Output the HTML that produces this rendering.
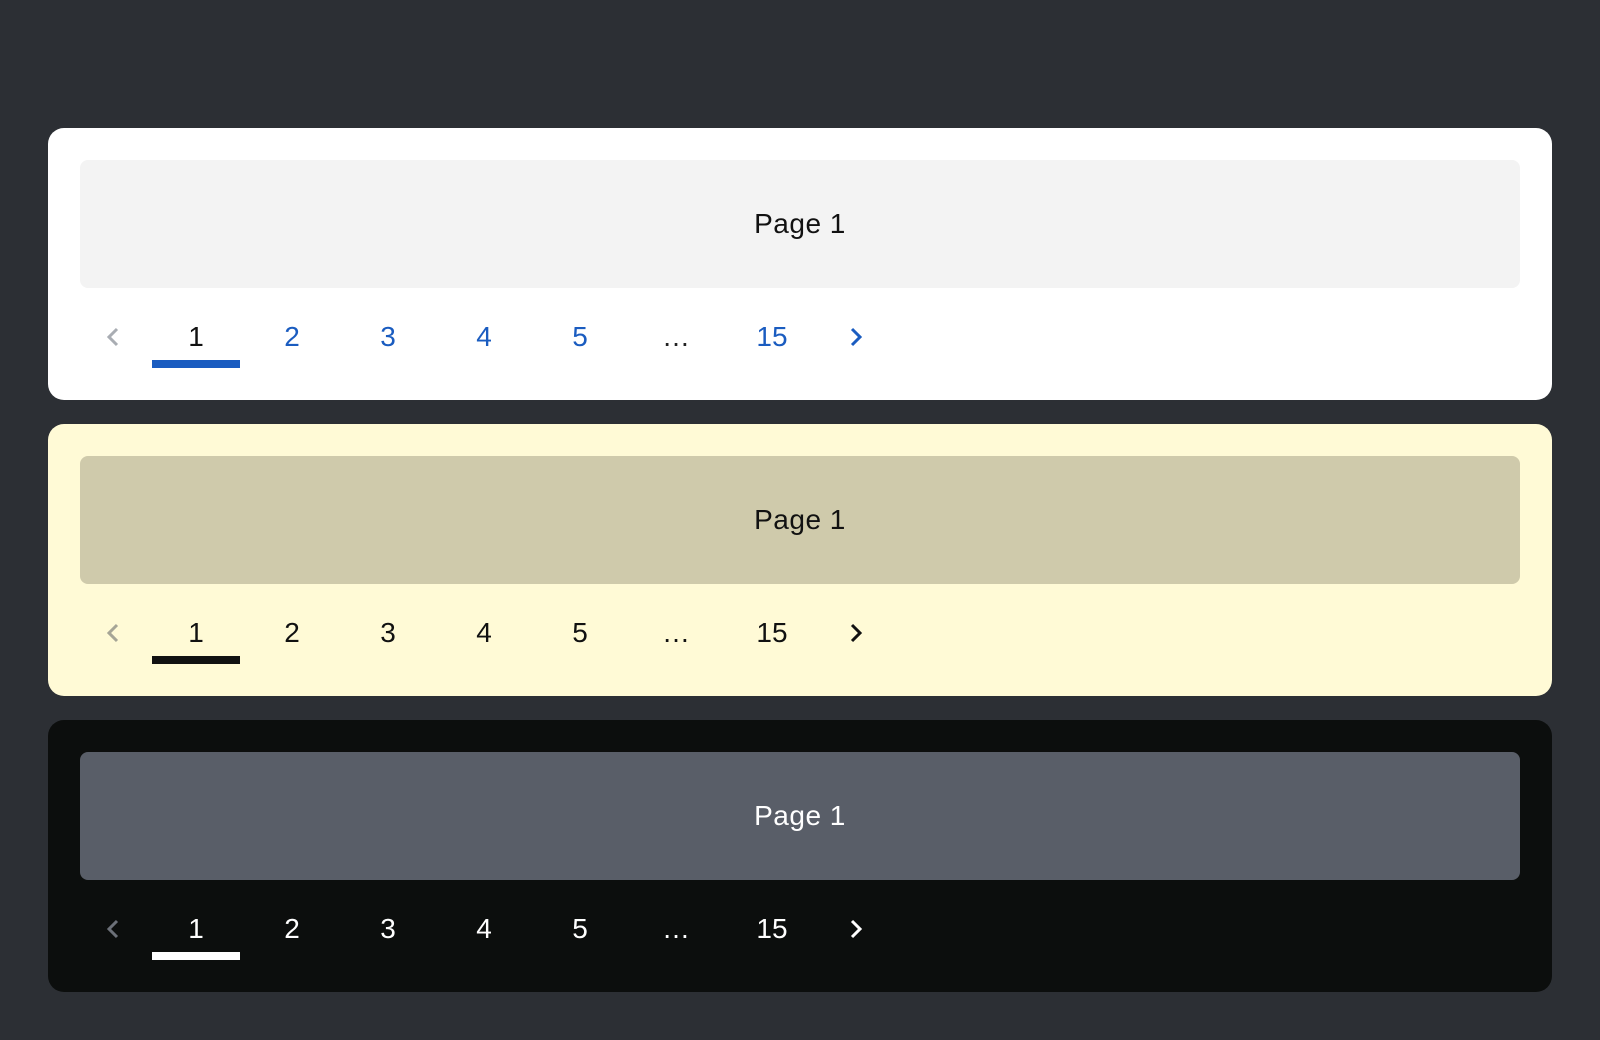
<!DOCTYPE html>
<html><head><style>
html,body{margin:0;width:1600px;height:1040px;background:#2c2f34;font-family:"Liberation Sans",sans-serif;overflow:hidden}
.card{position:absolute;left:48px;width:1504px;height:272px;border-radius:16px}
.box{position:absolute;left:32px;top:32px;width:1440px;height:128px;border-radius:8px;display:flex;align-items:center;justify-content:center;font-size:28px;font-weight:500;letter-spacing:.5px}
.pg{position:absolute;left:0;top:177px;height:64px;width:900px}
.it{position:absolute;top:0;width:88px;height:64px;line-height:64px;text-align:center;font-size:28px}
.ul{position:absolute;left:104px;top:55px;width:88px;height:8px}
svg{position:absolute;top:21px}
</style></head><body>

<div class="card" style="top:128px;background:#fff">
<div class="box" style="background:#f3f3f3;color:#111">Page 1</div>
<div class="pg" style="color:#1a5cc0">
<svg style="left:55px" width="20" height="22" viewBox="0 0 20 22"><path d="M14 3 L6 11 L14 19" fill="none" stroke="#a9adb3" stroke-width="3"/></svg>
<div class="it" style="left:104px;color:#111">1</div><div class="ul" style="background:#1a5cc0"></div>
<div class="it" style="left:200px">2</div><div class="it" style="left:296px">3</div><div class="it" style="left:392px">4</div><div class="it" style="left:488px">5</div><div class="it" style="left:584px;color:#222">…</div><div class="it" style="left:680px">15</div>
<svg style="left:798px" width="20" height="22" viewBox="0 0 20 22"><path d="M6 3 L14 11 L6 19" fill="none" stroke="#1a5cc0" stroke-width="3"/></svg>
</div></div>

<div class="card" style="top:424px;background:#fffad6">
<div class="box" style="background:#cfcaab;color:#111">Page 1</div>
<div class="pg" style="color:#111">
<svg style="left:55px" width="20" height="22" viewBox="0 0 20 22"><path d="M14 3 L6 11 L14 19" fill="none" stroke="#a6a596" stroke-width="3"/></svg>
<div class="it" style="left:104px">1</div><div class="ul" style="background:#111"></div>
<div class="it" style="left:200px">2</div><div class="it" style="left:296px">3</div><div class="it" style="left:392px">4</div><div class="it" style="left:488px">5</div><div class="it" style="left:584px">…</div><div class="it" style="left:680px">15</div>
<svg style="left:798px" width="20" height="22" viewBox="0 0 20 22"><path d="M6 3 L14 11 L6 19" fill="none" stroke="#111" stroke-width="3"/></svg>
</div></div>

<div class="card" style="top:720px;background:#0c0e0d">
<div class="box" style="background:#595e68;color:#fff">Page 1</div>
<div class="pg" style="color:#fff">
<svg style="left:55px" width="20" height="22" viewBox="0 0 20 22"><path d="M14 3 L6 11 L14 19" fill="none" stroke="#6c7078" stroke-width="3"/></svg>
<div class="it" style="left:104px">1</div><div class="ul" style="background:#fff"></div>
<div class="it" style="left:200px">2</div><div class="it" style="left:296px">3</div><div class="it" style="left:392px">4</div><div class="it" style="left:488px">5</div><div class="it" style="left:584px">…</div><div class="it" style="left:680px">15</div>
<svg style="left:798px" width="20" height="22" viewBox="0 0 20 22"><path d="M6 3 L14 11 L6 19" fill="none" stroke="#fff" stroke-width="3"/></svg>
</div></div>

</body></html>
